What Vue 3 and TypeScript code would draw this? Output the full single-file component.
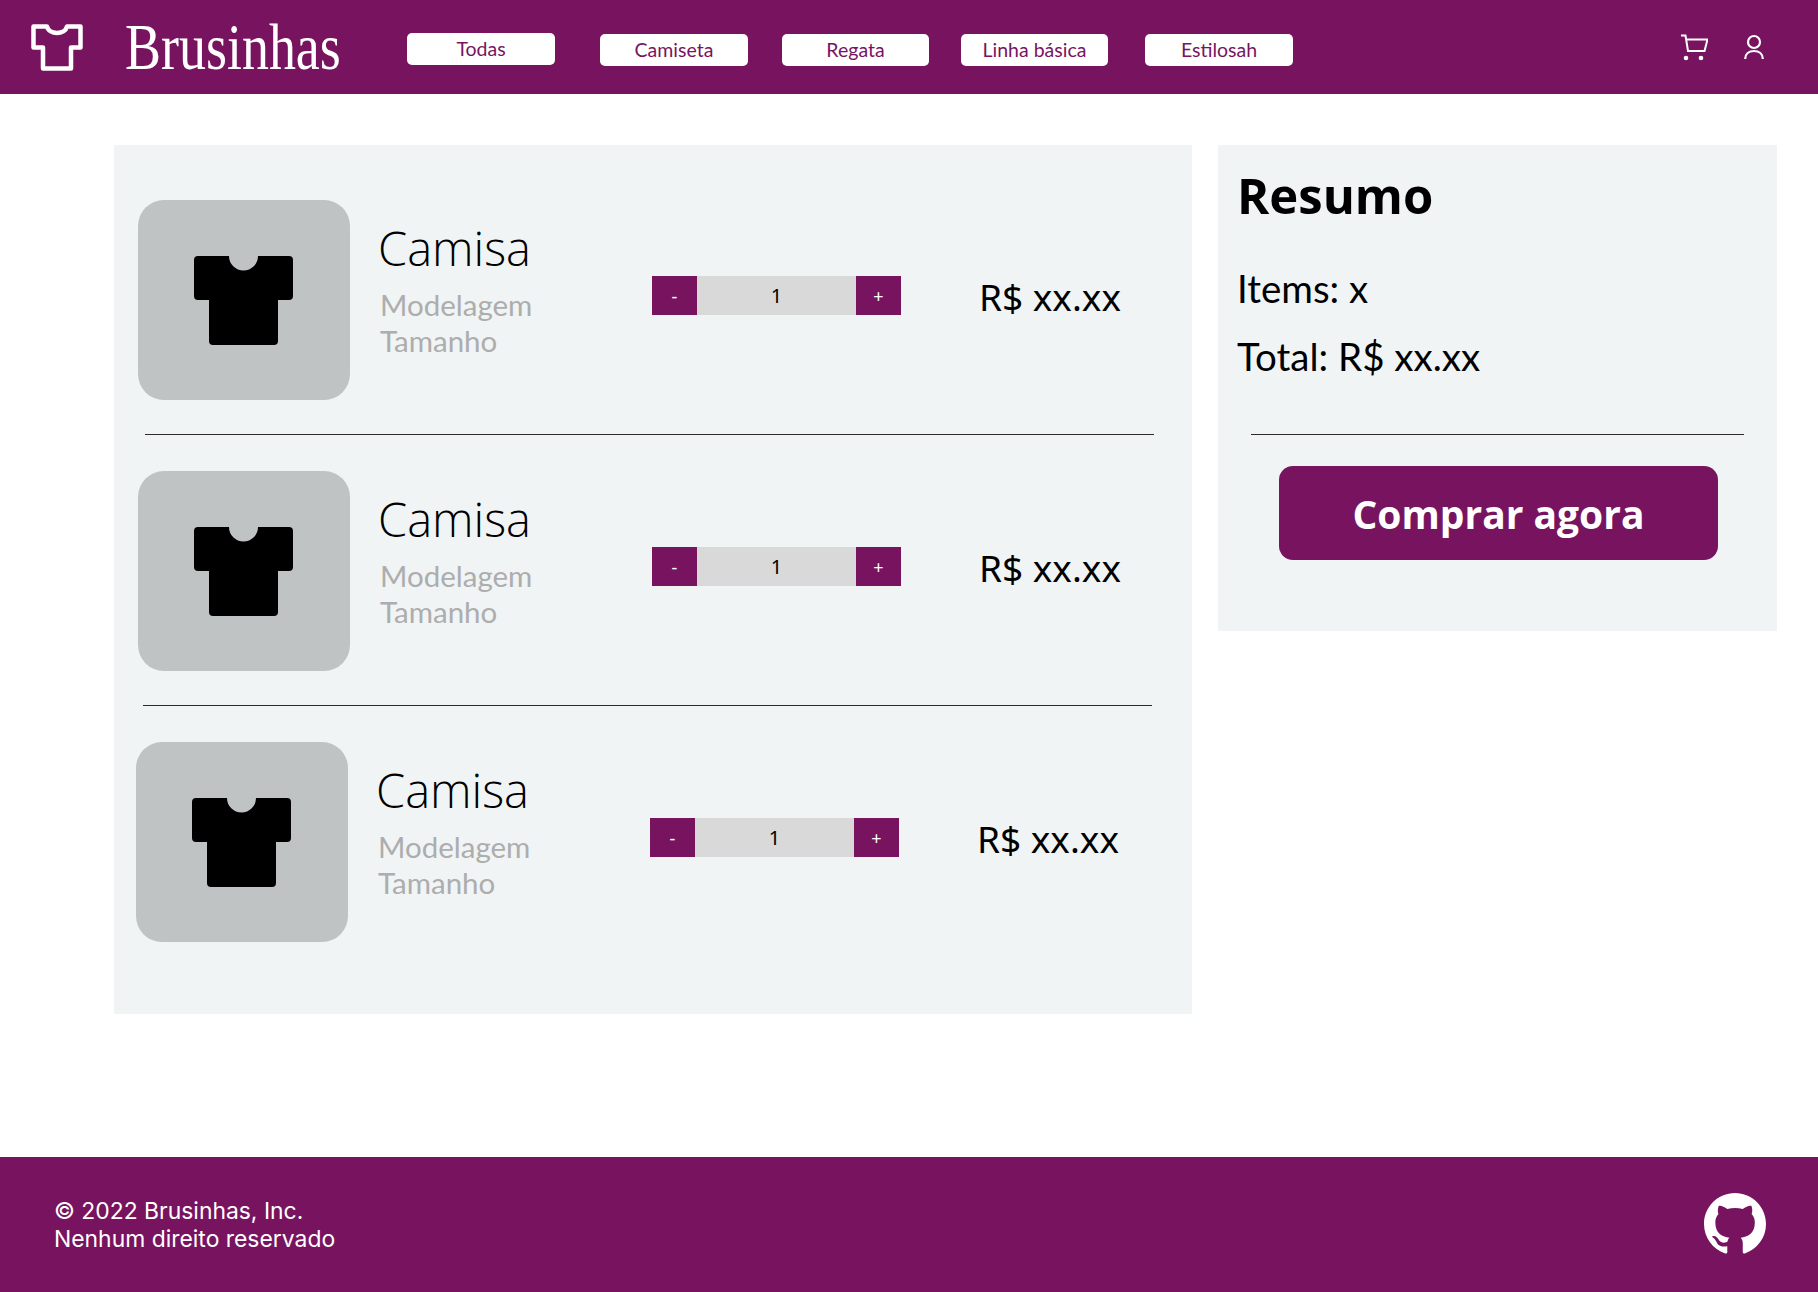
<template>
  <div class="page">
    <header class="topbar">
      <svg class="logo" viewBox="0 0 52 47" fill="none" stroke="#fff" stroke-width="4.5" stroke-linejoin="round">
        <path d="M2.500 2.500H16C18 11 34 11 36 2.500H49.500V23.500H40V44.500H12V23.500H2.500Z" />
      </svg>
      <span class="brand">Brusinhas</span>
      <nav class="nav">
        <button
          v-for="n in navItems"
          :key="n.label"
          class="nav-btn"
          :class="{ raised: n.raised }"
          :style="{ width: n.width + 'px', marginLeft: n.gap + 'px' }"
        >{{ n.label }}</button>
      </nav>
      <div class="actions">
        <svg class="cart" viewBox="0 0 28 27" fill="none" stroke="#fff" stroke-width="2">
          <path d="M1 1.500H5.500L8 17H24.500L27.500 5.500H6" />
          <circle cx="6" cy="24" r="2.300" fill="#fff" stroke="none" />
          <circle cx="21" cy="24" r="2.300" fill="#fff" stroke="none" />
        </svg>
        <svg class="user" viewBox="0 0 20 27" fill="none" stroke="#fff" stroke-width="2.200">
          <circle cx="10" cy="8" r="6" />
          <path d="M1.200 25C1.200 20 5 17 10 17C15 17 18.800 20 18.800 25" />
        </svg>
      </div>
    </header>

    <main class="content">
      <section class="cart-panel">
        <template v-for="(item, i) in items" :key="item.id">
          <div class="item" :class="{ shifted: i === 2 }">
            <div class="thumb">
              <svg class="tee" viewBox="0 0 99 89">
                <path d="M4 0H35A14.500 14.500 0 0 0 64 0H95a4 4 0 0 1 4 4V40a4 4 0 0 1-4 4H84V85a4 4 0 0 1-4 4H19a4 4 0 0 1-4-4V44H4a4 4 0 0 1-4-4V4a4 4 0 0 1 4-4Z" />
              </svg>
            </div>
            <div class="info">
              <h2>{{ item.name }}</h2>
              <p>{{ item.model }}</p>
              <p>{{ item.size }}</p>
            </div>
            <div class="qty">
              <button>-</button>
              <span>{{ item.qty }}</span>
              <button>+</button>
            </div>
            <div class="price">{{ item.price }}</div>
          </div>
          <div v-if="i < items.length - 1" class="divider" :class="{ shifted: i === 1 }"></div>
        </template>
      </section>

      <aside class="summary">
        <h1>Resumo</h1>
        <p class="line">Items: x</p>
        <p class="line">Total: R$ xx.xx</p>
        <div class="summary-rule"></div>
        <button class="buy">Comprar agora</button>
      </aside>
    </main>

    <footer class="footer">
      <div class="legal">
        <div>© 2022 Brusinhas, Inc.</div>
        <div>Nenhum direito reservado</div>
      </div>
      <svg class="github" viewBox="0 0 16 16" fill="#fff">
        <path d="M8 0C3.58 0 0 3.58 0 8c0 3.540 2.290 6.530 5.470 7.590.4.070.55-.17.55-.38 0-.19-.01-.82-.01-1.490-2.010.37-2.530-.49-2.690-.94-.09-.23-.48-.94-.82-1.130-.28-.15-.68-.52-.01-.53.63-.01 1.080.58 1.230.82.72 1.210 1.870.87 2.330.66.07-.52.28-.87.51-1.070-1.780-.2-3.640-.89-3.640-3.950 0-.87.31-1.590.82-2.150-.08-.2-.36-1.020.08-2.120 0 0 .67-.21 2.200.82.64-.18 1.320-.27 2-.27.68 0 1.360.09 2 .27 1.530-1.040 2.200-.82 2.200-.82.44 1.100.16 1.920.08 2.120.51.56.82 1.270.82 2.150 0 3.070-1.870 3.750-3.650 3.950.29.25.54.73.54 1.480 0 1.070-.01 1.930-.01 2.200 0 .21.15.46.55.38A8.013 8.013 0 0 0 16 8c0-4.420-3.580-8-8-8z" />
      </svg>
    </footer>
  </div>
</template>

<script setup lang="ts">
type NavItem = { label: string; width: number; gap: number; raised?: boolean };
type CartItem = { id: number; name: string; model: string; size: string; qty: number; price: string };

const navItems: NavItem[] = [
  { label: 'Todas', width: 148, gap: 0, raised: true },
  { label: 'Camiseta', width: 148, gap: 45 },
  { label: 'Regata', width: 147, gap: 34 },
  { label: 'Linha básica', width: 147, gap: 32 },
  { label: 'Estilosah', width: 148, gap: 37 }
];

const items: CartItem[] = [1, 2, 3].map(id => ({
  id,
  name: 'Camisa',
  model: 'Modelagem',
  size: 'Tamanho',
  qty: 1,
  price: 'R$ xx.xx'
}));
</script>

<style>
html, body {
  margin: 0;
  background: #fff;
}
</style>

<style scoped>
.page {
  min-height: 1292px;
  display: flex;
  flex-direction: column;
  font-family: "Lato", "Noto Sans", sans-serif;
  color: #000;
}
button {
  border: none;
  cursor: pointer;
  font-family: inherit;
}
h1, h2, p {
  margin: 0;
  font-weight: inherit;
}

.topbar {
  height: 94px;
  flex: none;
  background: #78145f;
  display: flex;
  align-items: center;
  padding: 0 54px 0 31px;
}
.logo {
  width: 52px;
  height: 47px;
  flex: none;
}
.brand {
  width: 215px;
  margin-left: 42px;
  font-family: "Liberation Serif", serif;
  font-size: 65px;
  line-height: 1;
  color: #fff;
  flex: none;
  transform: scaleX(0.83);
  transform-origin: left center;
}
.nav {
  display: flex;
  align-items: center;
  margin: 6px 0 0 67px;
}
.nav-btn {
  height: 32px;
  padding: 0 0 2px;
  background: #fff;
  color: #78145f;
  border-radius: 5px;
  font-size: 19.5px;
}
.nav-btn.raised {
  transform: translateY(-1px);
}
.actions {
  margin-left: auto;
  display: flex;
  align-items: center;
  gap: 36px;
}
.cart {
  width: 28px;
  height: 27px;
}
.user {
  width: 20px;
  height: 27px;
}

.content {
  flex: 1;
  display: flex;
  align-items: flex-start;
  gap: 26px;
  padding: 51px 41px 0 114px;
}
.cart-panel {
  width: 1078px;
  height: 869px;
  box-sizing: border-box;
  padding: 55px 0 0 23.5px;
  background: #f0f4f5;
  flex: none;
}
.item {
  display: flex;
  height: 200px;
}
.item.shifted {
  margin-left: -2px;
}
.thumb {
  width: 212px;
  height: 200px;
  flex: none;
  border-radius: 26px;
  background: #bfc3c4;
  display: flex;
  align-items: center;
  justify-content: center;
}
.tee {
  width: 99px;
  height: 89px;
  fill: #000;
  margin-top: 1px;
}
.info {
  width: 274px;
  flex: none;
  margin-left: 28.5px;
  padding-top: 20px;
  font-size: 29.5px;
  line-height: 36px;
  color: #adadad;
}
.info h2 {
  font-family: "Open Sans", sans-serif;
  font-size: 47px;
  font-weight: 300;
  line-height: 56px;
  color: #000;
  margin-bottom: 11px;
}
.info p {
  padding-left: 2px;
}
.qty {
  width: 249px;
  height: 39px;
  flex: none;
  margin-top: 76px;
  display: flex;
  background: #d9d9d9;
  font-family: "Noto Sans", sans-serif;
}
.qty button {
  width: 45px;
  padding: 0;
  background: #78145f;
  color: #fff;
  font-size: 18px;
  font-family: inherit;
}
.qty span {
  flex: 1;
  text-align: center;
  font-size: 20px;
  line-height: 39px;
}
.price {
  margin: 72px 0 0 78px;
  font-family: "Noto Sans", sans-serif;
  font-size: 37px;
  line-height: 50px;
  white-space: nowrap;
}
.divider {
  height: 1px;
  width: 1009px;
  margin: 34px 0 36px 7.5px;
  background: #2c2c2c;
}
.divider.shifted {
  margin-left: 5.5px;
}

.summary {
  width: 559px;
  height: 486px;
  box-sizing: border-box;
  flex: none;
  padding: 20px 0 0 19px;
  background: #f0f4f5;
}
.summary h1 {
  font-family: "Open Sans", sans-serif;
  font-size: 49px;
  font-weight: 700;
  line-height: 60px;
  margin-bottom: 40px;
}
.line {
  font-size: 38.5px;
  line-height: 46px;
  margin-bottom: 22px;
}
.summary-rule {
  width: 493px;
  height: 1px;
  margin: 55px 0 31px 14px;
  background: #2c2c2c;
}
.buy {
  display: block;
  width: 439px;
  height: 94px;
  margin-left: 42px;
  padding: 0;
  background: #78145f;
  color: #fff;
  border-radius: 14px;
  font-family: "Open Sans", sans-serif;
  font-size: 39px;
  font-weight: 700;
}

.footer {
  height: 135px;
  flex: none;
  background: #78145f;
  display: flex;
  align-items: center;
  justify-content: space-between;
  padding: 0 52px 0 54px;
  color: #fff;
  font-family: "Inter", sans-serif;
  font-size: 22.9px;
  line-height: 28px;
}
.github {
  width: 62px;
  height: 62px;
  margin-bottom: 2px;
}
</style>
